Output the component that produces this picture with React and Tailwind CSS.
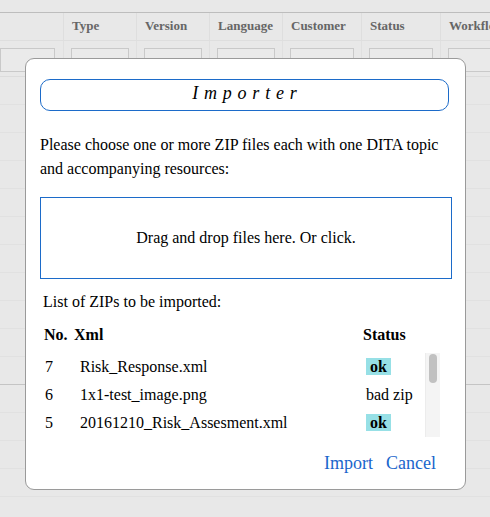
import React from 'react';

const cols = [
  { label: '', w: 'w-[64px]' },
  { label: 'Type', w: 'w-[73px]' },
  { label: 'Version', w: 'w-[73px]' },
  { label: 'Language', w: 'w-[73px]' },
  { label: 'Customer', w: 'w-[79px]' },
  { label: 'Status', w: 'w-[79px]' },
  { label: 'Workflow', w: 'w-[79px]' },
];

const files = [
  { no: 7, name: 'Risk_Response.xml', ok: true },
  { no: 6, name: '1x1-test_image.png', ok: false },
  { no: 5, name: '20161210_Risk_Assesment.xml', ok: true },
];

function BackgroundTable() {
  return (
    <div className="pt-[12px]">
      <div className="border-t border-[#bdbdbd]">
        {/* header */}
        <div className="flex h-[28px] border-b border-[#dedede]">
          {cols.map((c, i) => (
            <div
              key={i}
              className={`${c.w} shrink-0 border-r border-[#dedede] pl-[8px] pt-[3px] text-[13px] font-bold text-[#666] whitespace-nowrap overflow-hidden`}
            >
              {c.label}
            </div>
          ))}
        </div>
        {/* filter row */}
        <div className="flex h-[36px] border-b border-[#dcdcdc]">
          {cols.map((c, i) => (
            <div key={i} className={`${c.w} shrink-0 border-r border-[#e0e0e0] pt-[7px] ${i === 0 ? 'pr-[8px]' : 'px-[7px]'}`}>
              <div className="h-[24px] border border-[#c9c9c9] bg-[#eaeaea]" />
            </div>
          ))}
        </div>
        {Array.from({ length: 15 }).map((_, i) => (
          <div
            key={i}
            className={`h-[28px] border-b ${i === 10 ? 'border-[#c4c4c4]' : 'border-[#e1e1e1]'}`}
          />
        ))}
      </div>
    </div>
  );
}

export default function App() {
  return (
    <div
      className="relative w-[490px] h-[517px] overflow-hidden bg-[#e8e8e8] text-black"
      style={{ fontFamily: '"Liberation Serif", "Times New Roman", serif' }}
    >
      <BackgroundTable />

      {/* Modal */}
      <div className="absolute left-[25px] top-[58px] w-[441px] h-[432px] bg-white border border-[#9a9a9a] rounded-[9px] pl-[14px] pr-[16px] pt-[20px]">
        <div className="h-[32px] border border-[#1c6bc9] rounded-[10px] flex items-center justify-center pb-[4px]">
          <span className="italic text-[18px] tracking-[0.32em] pl-[0.32em]">Importer</span>
        </div>

        <p className="mt-[22px] text-[16px] leading-[24px]">
          Please choose one or more ZIP files each with one DITA topic and accompanying resources:
        </p>

        <div className="mt-[16px] mr-[-3px] h-[82px] border border-[#1c6bc9] flex items-center justify-center text-[16px] cursor-pointer">
          Drag and drop files here. Or click.
        </div>

        <div className="mt-[11px] pl-[3px] text-[16px] leading-[24px]">List of ZIPs to be imported:</div>

        {/* header */}
        <div className="mt-[7px] flex h-[28px] items-center text-[16px] font-bold">
          <span className="w-[34px] pl-[4px]">No.</span>
          <span className="w-[289px]">Xml</span>
          <span>Status</span>
        </div>

        {/* rows */}
        <div className="mt-[4px] flex h-[84px]">
          <div className="w-[385px]">
            {files.map((f) => (
              <div key={f.no} className="flex h-[28px] items-center text-[16px] pb-[1px]">
                <span className="w-[40px] pl-[5px]">{f.no}</span>
                <span className="w-[286px] whitespace-nowrap">{f.name}</span>
                {f.ok ? (
                  <span className="bg-[#97e0e6] font-bold px-[4px] leading-[17px]">ok</span>
                ) : (
                  <span>bad zip</span>
                )}
              </div>
            ))}
          </div>
          <div className="w-[15px] h-[84px] bg-[#f4f4f4] border-l border-[#ececec] flex justify-center pt-[1px]">
            <div className="w-[8px] h-[29px] rounded-full bg-[#c1c1c1]" />
          </div>
        </div>

        {/* actions */}
        <div className="mt-[13px] flex justify-end gap-[13px] pr-[13px] text-[18px] text-[#1a66cc]">
          <button className="cursor-pointer">Import</button>
          <button className="cursor-pointer">Cancel</button>
        </div>
      </div>
    </div>
  );
}
